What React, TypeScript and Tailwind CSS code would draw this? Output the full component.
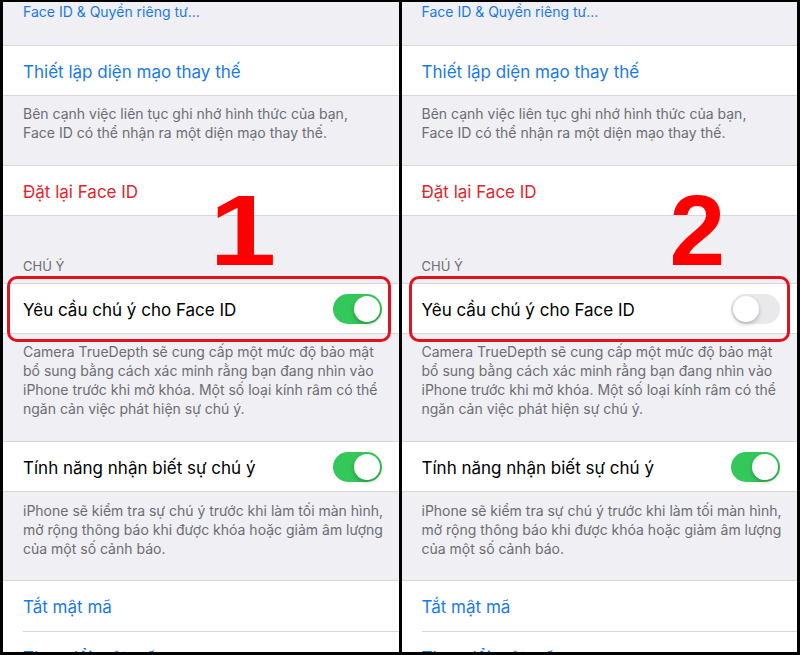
const font = { fontFamily: "Inter, 'Noto Sans', sans-serif" };

function Toggle({ on }: { on: boolean }) {
  return on ? (
    <div className="w-[49px] h-[30px] rounded-full bg-[#34c759] relative shrink-0">
      <div className="absolute right-[2px] top-[2px] w-[26px] h-[26px] rounded-full bg-white shadow-[0_2px_4px_rgba(0,0,0,0.25)]" />
    </div>
  ) : (
    <div className="w-[49px] h-[30px] rounded-full bg-[#e9e9eb] relative shrink-0">
      <div className="absolute left-[2px] top-[2px] w-[26px] h-[26px] rounded-full bg-white shadow-[0_2px_4px_rgba(0,0,0,0.25)]" />
    </div>
  );
}

function Cell({
  children,
  toggle,
  color = "text-black",
}: {
  children: React.ReactNode;
  toggle?: boolean;
  color?: string;
}) {
  return (
    <div className="h-[51px] shrink-0 bg-white border-y border-[#d6d6da] flex items-center justify-between pl-[20px] pr-[17px]">
      <span className={`text-[17px] leading-[22px] pt-[2px] whitespace-nowrap ${color}`}>{children}</span>
      {toggle !== undefined && <Toggle on={toggle} />}
    </div>
  );
}

function Footer({ lines, className }: { lines: string[]; className: string }) {
  return (
    <div className={`shrink-0 px-[20px] text-[14px] leading-[19px] text-[#6d6d72] whitespace-nowrap ${className}`}>
      {lines.map((l) => (
        <div key={l}>{l}</div>
      ))}
    </div>
  );
}

function Panel({ on, digit }: { on: boolean; digit: "1" | "2" }) {
  return (
    <div className="flex-1 relative overflow-hidden bg-[#efeff4] flex flex-col" style={font}>
      <div className="h-[43px] shrink-0 px-[20px] text-[14px] leading-[20px] text-[#1a7ae4]">
        Face ID &amp; Quyền riêng tư...
      </div>
      <Cell color="text-[#1a7ae4]">Thiết lập diện mạo thay thế</Cell>
      <Footer
        className="h-[69px] pt-[8px]"
        lines={[
          "Bên cạnh việc liên tục ghi nhớ hình thức của bạn,",
          "Face ID có thể nhận ra một diện mạo thay thế.",
        ]}
      />
      <Cell color="text-[#e3242b]">Đặt lại Face ID</Cell>
      <div className="h-[67px] shrink-0 px-[20px] pt-[42px] text-[13px] leading-[16px] text-[#6d6d72]">
        CHÚ Ý
      </div>
      <Cell toggle={on}>Yêu cầu chú ý cho Face ID</Cell>
      <Footer
        className="h-[107px] pt-[8px]"
        lines={[
          "Camera TrueDepth sẽ cung cấp một mức độ bảo mật",
          "bổ sung bằng cách xác minh rằng bạn đang nhìn vào",
          "iPhone trước khi mở khóa. Một số loại kính râm có thể",
          "ngăn cản việc phát hiện sự chú ý.",
        ]}
      />
      <Cell toggle={true}>Tính năng nhận biết sự chú ý</Cell>
      <Footer
        className="h-[88px] pt-[9px]"
        lines={[
          "iPhone sẽ kiểm tra sự chú ý trước khi làm tối màn hình,",
          "mở rộng thông báo khi được khóa hoặc giảm âm lượng",
          "của một số cảnh báo.",
        ]}
      />
      <div className="shrink-0 bg-white border-t border-[#d6d6da]">
        <div className="h-[51px] ml-[20px] border-b border-[#d6d6da] flex items-center">
          <span className="text-[17px] leading-[22px] pt-[2px] text-[#1a7ae4]">Tắt mật mã</span>
        </div>
        <div className="h-[51px] ml-[20px] flex items-center">
          <span className="text-[17px] leading-[22px] text-[#1a7ae4]">Thay đổi mật mã</span>
        </div>
      </div>

      {/* highlight box */}
      <div
        className={`absolute top-[274px] h-[66px] border-[3px] border-[#e3101e] rounded-[10px] ${
          digit === "1" ? "left-[4px] w-[384px]" : "left-[7px] w-[381px]"
        }`}
      />
      <div
        className={`absolute top-[178px] text-[100px] leading-none font-bold text-[#ff0000] ${
          digit === "1" ? "left-[212px] scale-x-[1.2]" : "left-[268px]"
        }`}
        style={{ fontFamily: "'Liberation Sans', Arial, sans-serif" }}
      >
        {digit}
      </div>
    </div>
  );
}

export default function App() {
  return (
    <div className="w-[800px] h-[655px] bg-black pt-[2px] pb-[3px] px-[3px] flex gap-[3px]">
      <Panel on={true} digit="1" />
      <Panel on={false} digit="2" />
    </div>
  );
}
